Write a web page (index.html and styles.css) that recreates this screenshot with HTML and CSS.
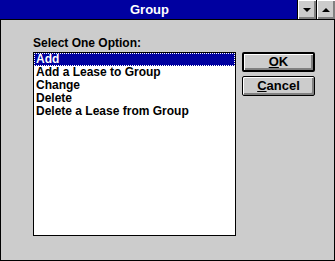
FILE: index.html
```
<!DOCTYPE html>
<html>
	<head>
		<meta charset="UTF-8">
		<title>Group</title>
		<link rel="stylesheet" href="styles.css">
	</head>
	<body>
		<div class="window">
			<div class="titlebar">
				<div class="caption">Group</div>
				<div class="tbtn"><span class="arrow-down"></span></div>
				<div class="tbtn"><span class="arrow-up"></span></div>
			</div>
			<div class="client">
				<div class="label">Select One Option:</div>
				<div class="main">
					<ul class="listbox">
						<li class="selected"><span>Add</span></li>
						<li><span>Add a Lease to Group</span></li>
						<li><span>Change</span></li>
						<li><span>Delete</span></li>
						<li><span>Delete a Lease from Group</span></li>
					</ul>
					<div class="buttons">
						<div class="btn default"><u>O</u>K</div>
						<div class="btn"><u>C</u>ancel</div>
					</div>
				</div>
			</div>
		</div>
	</body>
</html>
```
FILE: styles.css
```
* {
	padding: 0px;
	margin: 0px;
	box-sizing: border-box;
}

body {
	font: 700 12px "Liberation Sans", Arial, sans-serif;
	background: #cccccc;
}

.window {
	width: 335px;
	height: 261px;
	display: flex;
	flex-direction: column;
}

.titlebar {
	height: 20px;
	display: flex;
	background: #0000a0;
	border-bottom: 1px solid #000;
}

.caption {
	flex: 1;
	color: #fff;
	text-align: center;
	font-size: 13px;
	line-height: 19px;
	padding-left: 2px;
}

.tbtn {
	width: 19px;
	height: 19px;
	border-left: 1px solid #000;
	background: #cccccc;
	box-shadow: inset 1px 1px #fff, inset -1px -1px #808080, inset -2px -2px #808080;
	display: flex;
	align-items: center;
	justify-content: center;
}

.arrow-down {
	border-left: 4px solid transparent;
	border-right: 4px solid transparent;
	border-top: 4px solid #000;
	margin-right: 1px;
}

.arrow-up {
	border-left: 4px solid transparent;
	border-right: 4px solid transparent;
	border-bottom: 4px solid #000;
	margin-right: 1px;
}

.client {
	flex: 1;
	border: 1px solid #000;
	border-top: none;
	padding: 16px 0 0 32px;
}

.label {
	height: 16px;
	line-height: 14px;
	color: #000;
}

.main {
	display: flex;
	gap: 6px;
	align-items: flex-start;
}

.listbox {
	list-style: none;
	width: 203px;
	height: 184px;
	background: #fff;
	border: 1px solid #000;
}

.listbox li {
	height: 13px;
	line-height: 13px;
	padding-left: 2px;
	white-space: nowrap;
}

.listbox .selected {
	background: #0000a0;
	color: #fff;
	outline: 1px dotted #fff;
	outline-offset: -1px;
}

.buttons {
	display: flex;
	flex-direction: column;
	gap: 4px;
}

.btn {
	width: 73px;
	height: 20px;
	border: 1px solid #000;
	border-radius: 2px;
	background: #cccccc;
	box-shadow: inset 1px 1px #fff, inset -1px -1px #808080, inset -2px -2px #808080;
	text-align: center;
	font-size: 13px;
	line-height: 17px;
}

.btn.default {
	border-width: 2px;
	line-height: 15px;
}
```
